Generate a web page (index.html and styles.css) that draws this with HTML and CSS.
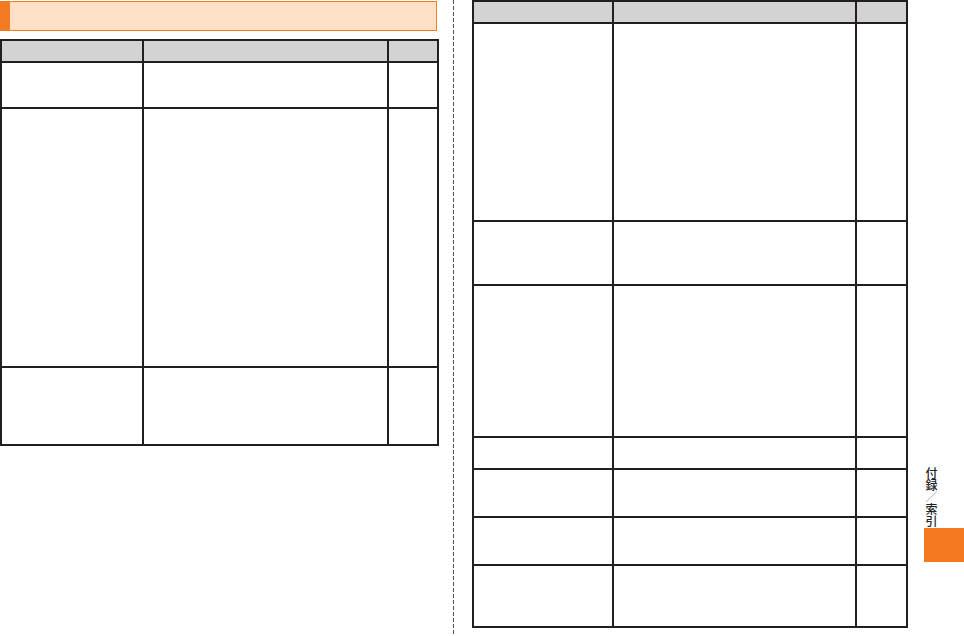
FILE: index.html
```html
<!DOCTYPE html>
<html lang="ja">
<head>
  <meta charset="UTF-8">
  <title>付録／索引</title>
  <link rel="stylesheet" href="styles.css">
</head>
<body>
  <div class="spread">

    <!-- Left page -->
    <div class="page page-left">
      <div class="section-title">
        <span class="section-mark"></span>
      </div>

      <table class="grid grid-left">
        <tr class="head"><th></th><th></th><th></th></tr>
        <tr class="h46"><td></td><td></td><td></td></tr>
        <tr class="h259"><td></td><td></td><td></td></tr>
        <tr class="h78"><td></td><td></td><td></td></tr>
      </table>
    </div>

    <!-- Fold line -->
    <div class="fold"></div>

    <!-- Right page -->
    <div class="page page-right">
      <table class="grid grid-right">
        <tr class="head"><th></th><th></th><th></th></tr>
        <tr class="h198"><td></td><td></td><td></td></tr>
        <tr class="h64"><td></td><td></td><td></td></tr>
        <tr class="h152"><td></td><td></td><td></td></tr>
        <tr class="h32"><td></td><td></td><td></td></tr>
        <tr class="h48"><td></td><td></td><td></td></tr>
        <tr class="h48"><td></td><td></td><td></td></tr>
        <tr class="h62"><td></td><td></td><td></td></tr>
      </table>
    </div>

    <!-- Side index tab -->
    <div class="side-tab">
      <div class="tab-label">付録<span class="tab-slash">／</span>索引</div>
      <div class="tab-block"></div>
    </div>

  </div>
</body>
</html>
```

FILE: styles.css
```css
* {
  margin: 0;
  padding: 0;
  box-sizing: border-box;
}

body {
  background-color: #fff;
  font-family: "Noto Sans CJK JP", "Noto Sans", sans-serif;
  color: #333;
}

.spread {
  display: flex;
  width: 964px;
  height: 636px;
  overflow: hidden;
}

/* Pages */
.page-left {
  width: 438px;
  padding-top: 1px;
}

.page-right {
  width: 435px;
  margin-left: 18px;
}

/* Section heading bar */
.section-title {
  display: flex;
  height: 30px;
  width: 437px;
  background-color: #fde0c6;
  border: 1px solid #f47b24;
}

.section-mark {
  width: 10px;
  margin: -1px 0 -1px -1px;
  background-color: #f47b24;
}

/* Tables */
.grid {
  border-collapse: collapse;
  table-layout: fixed;
}

.grid th,
.grid td {
  border: 2px solid #231f20;
  padding: 0;
}

.grid th {
  background-color: #d3d3d3;
}

.grid .head { height: 22px; }

.grid-left {
  width: 437px;
  margin-top: 8px;
}

.grid-left th:nth-child(1) { width: 142px; }
.grid-left th:nth-child(2) { width: 245px; }
.grid-left th:nth-child(3) { width: 50px; }

.grid-right {
  width: 434px;
  margin-top: 0;
}

.grid-right th:nth-child(1) { width: 140px; }
.grid-right th:nth-child(2) { width: 243px; }
.grid-right th:nth-child(3) { width: 51px; }

.h32 { height: 32px; }
.h46 { height: 46px; }
.h48 { height: 48px; }
.h62 { height: 62px; }
.h64 { height: 64px; }
.h78 { height: 78px; }
.h152 { height: 152px; }
.h198 { height: 198px; }
.h259 { height: 259px; }

/* Dashed fold line between pages */
.fold {
  width: 1px;
  height: 636px;
  margin-left: 15px;
  background: repeating-linear-gradient(to bottom, #555 0, #555 4px, transparent 4px, transparent 6px);
}

/* Side index tab */
.side-tab {
  display: flex;
  flex-direction: column;
  justify-content: flex-end;
  margin-left: 17px;
  width: 41px;
  padding-bottom: 74px;
}

.tab-label {
  writing-mode: vertical-rl;
  font-size: 12px;
  line-height: 12px;
  width: 12px;
  color: #222;
  font-weight: 500;
  margin-left: 1px;
  margin-bottom: 1px;
}

.tab-slash {
  color: #aaa;
  font-weight: 400;
}

.tab-block {
  height: 34px;
  background-color: #f47920;
}
```
